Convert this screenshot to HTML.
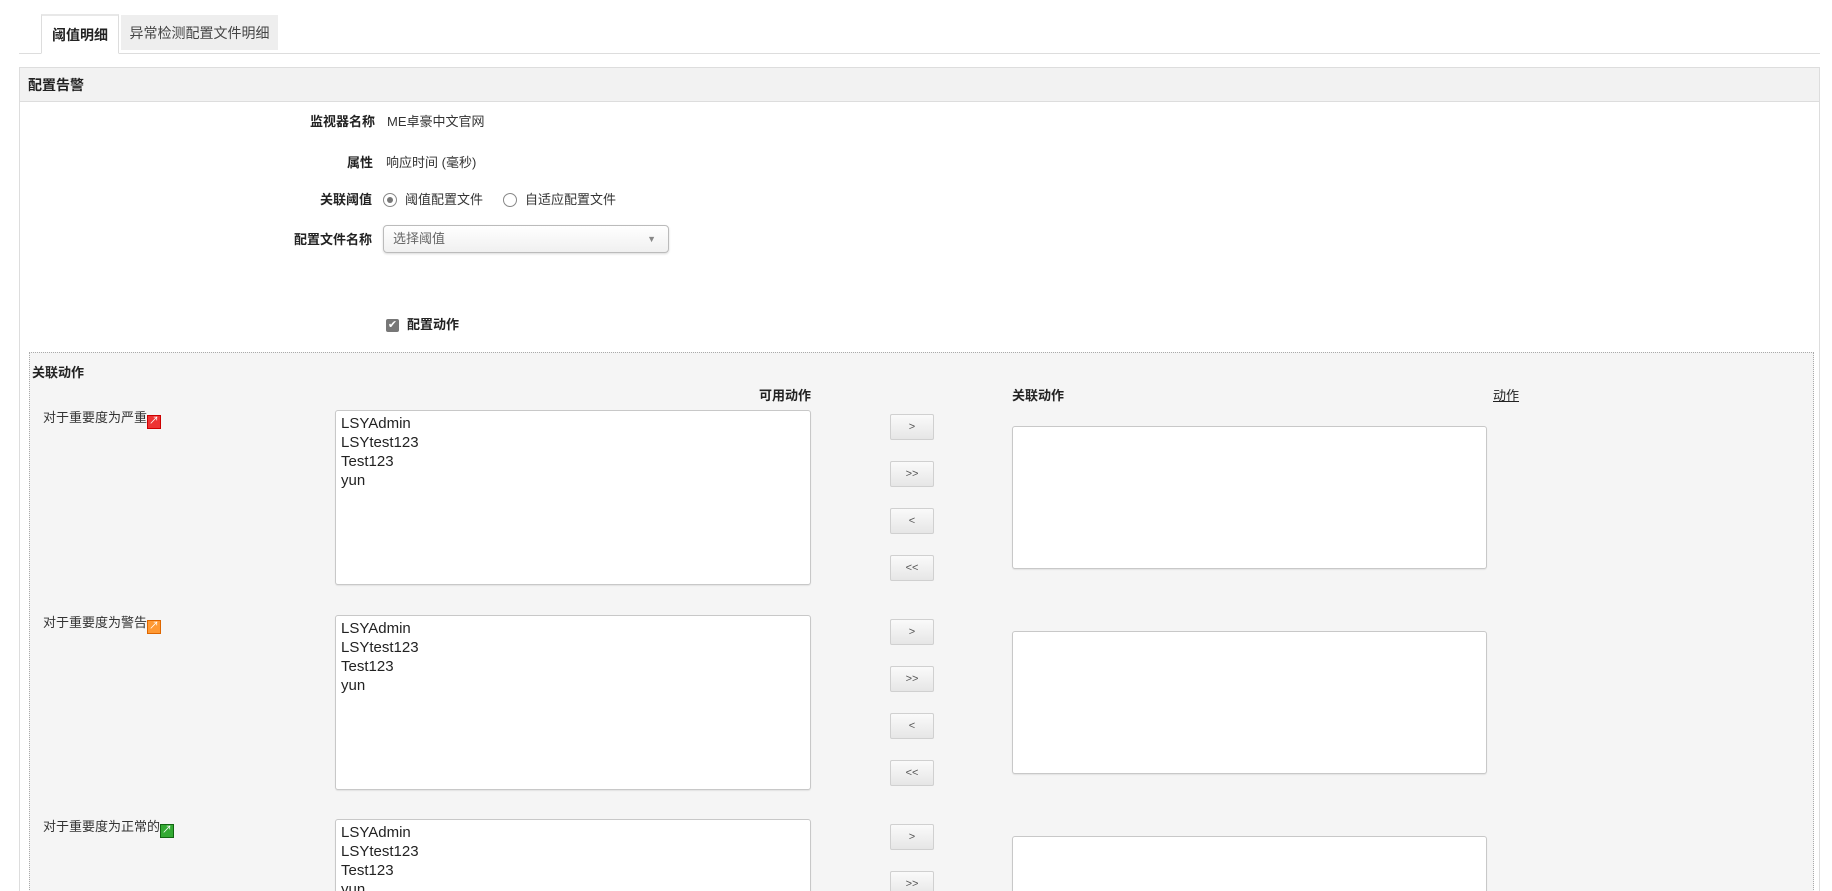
<!DOCTYPE html>
<html><head><meta charset="utf-8">
<style>
*{box-sizing:border-box;margin:0;padding:0}
html,body{width:1832px;height:891px;overflow:hidden;background:#fff}
body{font-family:"Liberation Sans","Noto Sans CJK SC",sans-serif;font-size:13px;color:#333}
#w{position:relative;width:1832px;height:891px;overflow:hidden}
.a{position:absolute;white-space:nowrap}
.b{font-weight:bold;color:#222}
.tab1{left:41px;top:14px;width:78px;height:40px;background:#fff;border:1px solid #ddd;border-bottom:1px solid #fff;border-top:2px solid #e8e8e8;font-weight:bold;font-size:14px;text-align:center;line-height:38px;color:#222;z-index:2}
.tab2{left:121px;top:15px;width:157px;height:35px;background:#eee;font-size:14px;text-align:center;line-height:36px;color:#444}
.list{position:absolute;background:#fff;border:1px solid #c8c8c8;border-radius:3px;box-shadow:0 1px 1px rgba(0,0,0,.08);font-size:15px;line-height:19px;padding:3px 5px;color:#222}
.btn{position:absolute;left:890px;width:44px;height:26px;border:1px solid #d0d0d0;border-radius:2px;background:linear-gradient(#fafafa,#e6e6e6);font-size:11px;color:#555;text-align:center;line-height:24px}
.ico{display:inline-block;width:14px;height:14px;vertical-align:-2px;border:1px solid;position:relative;color:#fff;font-size:10px;line-height:12px;text-align:center}
</style></head><body><div id="w">
<div class="a tab1">阈值明细</div>
<div class="a tab2">异常检测配置文件明细</div>
<div class="a" style="left:19px;top:53px;width:1801px;height:1px;background:#ddd"></div>
<div class="a" style="left:19px;top:67px;width:1801px;height:900px;border:1px solid #ddd;background:#fff"></div>
<div class="a" style="left:20px;top:68px;width:1799px;height:34px;background:#f2f2f2;border-bottom:1px solid #ddd"></div>
<div class="a b" style="left:28px;top:75px;font-size:14px;line-height:20px">配置告警</div>

<div class="a b" style="right:1457px;top:112px;line-height:20px">监视器名称</div>
<div class="a" style="left:387px;top:112px;line-height:20px">ME卓豪中文官网</div>
<div class="a b" style="right:1459px;top:153px;line-height:20px">属性</div>
<div class="a" style="left:386px;top:153px;line-height:20px">响应时间 (毫秒)</div>
<div class="a b" style="right:1460px;top:190px;line-height:20px">关联阈值</div>
<div class="a" style="left:383px;top:193px;width:14px;height:14px;border:1px solid #888;border-radius:50%;background:#fff"><div style="position:absolute;left:3px;top:3px;width:6px;height:6px;border-radius:50%;background:#777"></div></div>
<div class="a" style="left:405px;top:190px;line-height:20px">阈值配置文件</div>
<div class="a" style="left:503px;top:193px;width:14px;height:14px;border:1px solid #888;border-radius:50%;background:#fff"></div>
<div class="a" style="left:525px;top:190px;line-height:20px">自适应配置文件</div>
<div class="a b" style="right:1460px;top:230px;line-height:20px">配置文件名称</div>
<div class="a" style="left:383px;top:225px;width:286px;height:28px;border:1px solid #bbb;border-radius:4px;background:linear-gradient(#fff,#f0f0f0);box-shadow:0 1px 2px rgba(0,0,0,.15);color:#666;line-height:26px;padding-left:9px">选择阈值<span style="position:absolute;right:12px;top:0;font-size:9px;color:#888">▼</span></div>
<div class="a" style="left:386px;top:319px;width:13px;height:13px;background:#777;border-radius:2px;color:#fff;font-size:11px;line-height:13px;text-align:center">✔</div>
<div class="a b" style="left:407px;top:315px;line-height:20px">配置动作</div>

<div class="a" style="left:29px;top:352px;width:1785px;height:600px;background:#f5f5f5;border:1px dotted #aaa"></div>
<div class="a b" style="left:32px;top:363px;line-height:20px">关联动作</div>
<div class="a b" style="right:1021px;top:386px;line-height:20px">可用动作</div>
<div class="a b" style="left:1012px;top:386px;line-height:20px">关联动作</div>
<div class="a" style="left:1493px;top:386px;line-height:20px;text-decoration:underline;color:#222">动作</div>

<div class="a" style="left:43px;top:408px;line-height:20px">对于重要度为严重<span class="ico" style="border-color:#c00;background:#e33">↗</span></div>
<div class="list" style="left:335px;top:410px;width:476px;height:175px">LSYAdmin<br>LSYtest123<br>Test123<br>yun</div>
<div class="btn" style="top:414px">&gt;</div>
<div class="btn" style="top:461px">&gt;&gt;</div>
<div class="btn" style="top:508px">&lt;</div>
<div class="btn" style="top:555px">&lt;&lt;</div>
<div class="list" style="left:1012px;top:426px;width:475px;height:143px"></div>

<div class="a" style="left:43px;top:613px;line-height:20px">对于重要度为警告<span class="ico" style="border-color:#d60;background:#f93">↗</span></div>
<div class="list" style="left:335px;top:615px;width:476px;height:175px">LSYAdmin<br>LSYtest123<br>Test123<br>yun</div>
<div class="btn" style="top:619px">&gt;</div>
<div class="btn" style="top:666px">&gt;&gt;</div>
<div class="btn" style="top:713px">&lt;</div>
<div class="btn" style="top:760px">&lt;&lt;</div>
<div class="list" style="left:1012px;top:631px;width:475px;height:143px"></div>

<div class="a" style="left:43px;top:817px;line-height:20px">对于重要度为正常的<span class="ico" style="border-color:#161;background:#3a3">↗</span></div>
<div class="list" style="left:335px;top:819px;width:476px;height:175px">LSYAdmin<br>LSYtest123<br>Test123<br>yun</div>
<div class="btn" style="top:824px">&gt;</div>
<div class="btn" style="top:871px">&gt;&gt;</div>
<div class="list" style="left:1012px;top:836px;width:475px;height:143px"></div>
</div></body></html>
